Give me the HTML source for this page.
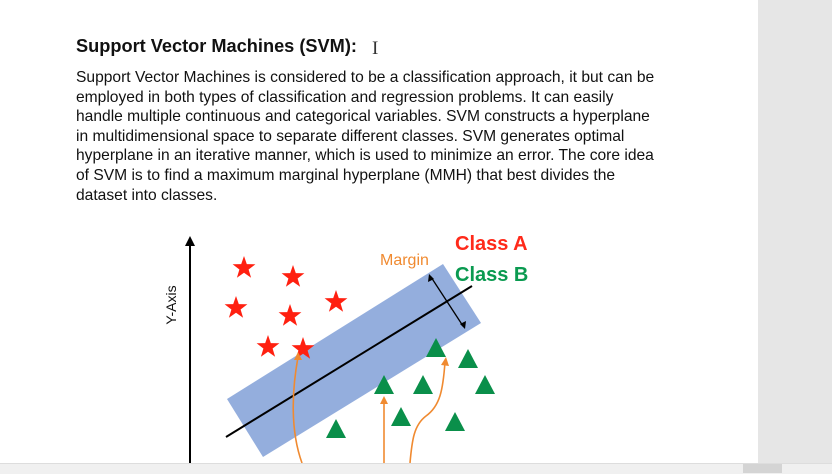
<html><head><style>
body{margin:0;width:832px;height:473px;overflow:hidden;background:#fff;position:relative;font-family:"Liberation Sans",Arial,sans-serif}
.r{position:absolute;left:758px;top:0;width:74px;height:463px;background:#e6e6e6}
.b{position:absolute;left:0;top:463px;width:832px;height:10px;background:#f0f0f0;border-top:1px solid #ddd}
h1{position:absolute;left:76px;top:36px;margin:0;font-size:18.2px;font-weight:bold;color:#111}
.p{position:absolute;left:76px;top:68px;font-size:15.6px;line-height:19.6px;color:#111;white-space:nowrap}
</style></head><body>
<div class="r"></div>
<h1>Support Vector Machines (SVM):</h1>
<div style="position:absolute;left:372px;top:38px;font-size:19px;color:#333;font-family:'Liberation Serif',serif">I</div>
<div class="p">Support Vector Machines is considered to be a classification approach, it but can be<br>employed in both types of classification and regression problems. It can easily<br>handle multiple continuous and categorical variables. SVM constructs a hyperplane<br>in multidimensional space to separate different classes. SVM generates optimal<br>hyperplane in an iterative manner, which is used to minimize an error. The core idea<br>of SVM is to find a maximum marginal hyperplane (MMH) that best divides the<br>dataset into classes.</div>
<svg width="832" height="473" style="position:absolute;left:0;top:0">
<defs><polygon id="s" points="0,-12 2.8,-3.9 11.4,-3.7 4.6,1.5 7.1,9.7 0,4.8 -7.1,9.7 -4.6,1.5 -11.4,-3.7 -2.8,-3.9" fill="#ff2010"/>
<polygon id="t" points="0,-10 10,9 -10,9" fill="#0a8f4a"/></defs>
<line x1="190" y1="240" x2="190" y2="463" stroke="#000" stroke-width="2"/>
<polygon points="190,236 185,246 195,246" fill="#000"/>
<text x="176" y="305" transform="rotate(-90 176 305)" text-anchor="middle" font-size="14" fill="#111">Y-Axis</text>
<polygon points="227,399 443,264 481,323 263,457" fill="#8eaadb" opacity=".95"/>
<line x1="226" y1="437" x2="472" y2="286" stroke="#000" stroke-width="2"/>
<line x1="431" y1="277" x2="463" y2="326" stroke="#000" stroke-width="1.3"/>
<polygon points="429,274 428,282 434,279" fill="#000"/><polygon points="465,329 466,321 460,324" fill="#000"/>
<use href="#s" x="244" y="268"/><use href="#s" x="293" y="277"/><use href="#s" x="236" y="308"/><use href="#s" x="290" y="316"/><use href="#s" x="336" y="302"/><use href="#s" x="268" y="347"/><use href="#s" x="303" y="349"/>
<use href="#t" x="436" y="348"/><use href="#t" x="468" y="359"/><use href="#t" x="384" y="385"/><use href="#t" x="423" y="385"/><use href="#t" x="485" y="385"/><use href="#t" x="401" y="417"/><use href="#t" x="455" y="422"/><use href="#t" x="336" y="429"/>
<g stroke="#f08a30" stroke-width="1.6" fill="none">
<path d="M298,357 C292,390 290,430 302,463"/>
<line x1="384" y1="400" x2="384" y2="463"/>
<path d="M410,463 C412,440 414,425 426,416 C440,406 443,390 445,362"/>
</g>
<polygon points="298,352 294,360 302,360" fill="#f08a30"/>
<polygon points="384,396 380,404 388,404" fill="#f08a30"/>
<polygon points="446,357 441,365 449,366" fill="#f08a30"/>
<text x="380" y="265" font-size="16" fill="#f08a30">Margin</text>
<text x="455" y="250" font-size="20" font-weight="bold" fill="#ff2a1a">Class A</text>
<text x="455" y="281" font-size="20" font-weight="bold" fill="#0a9a50">Class B</text>
</svg>
<div class="b"></div>
<div style="position:absolute;left:743px;top:464px;width:39px;height:9px;background:#d4d4d4"></div>
</body></html>
